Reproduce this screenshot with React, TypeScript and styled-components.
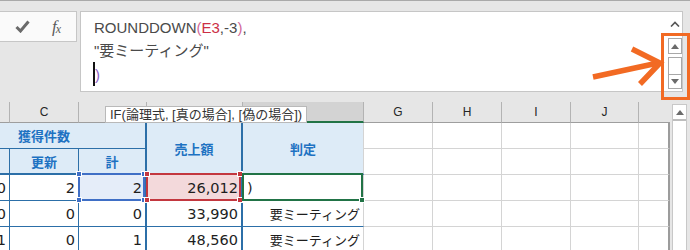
import React from 'react'
import styled, { createGlobalStyle } from 'styled-components'

const BLUE = '#2c6fa8'
const GRID = '#d4d4d4'
const HEAD_BG = '#ddebf7'
const HEAD_TEXT = '#1d72c2'
const ORANGE = '#f26a23'

const GlobalStyle = createGlobalStyle`
    html, body {
        margin: 0;
        padding: 0;
        background: #e6e6e6;
    }
    * {
        box-sizing: border-box;
    }
`

const Page = styled.div`
    position: relative;
    width: 690px;
    height: 250px;
    overflow: hidden;
    display: flex;
    flex-direction: column;
    background: #e6e6e6;
    border-top: 1px solid #a9a9a9;
    font-family: 'Liberation Sans', 'Noto Sans CJK JP', sans-serif;
`

const FormulaBar = styled.div`
    display: flex;
    align-items: flex-start;
    gap: 3px;
    height: 101px;
    padding: 10px 7px 0 0;
    flex-shrink: 0;
`

const ActionBox = styled.div`
    display: flex;
    align-items: center;
    gap: 22px;
    width: 77px;
    height: 31px;
    padding-left: 15px;
    background: #fafafa;
    border: 1px solid #c6c6c6;
    border-left: none;
`

const Fx = styled.span`
    font-family: 'Liberation Serif', serif;
    font-style: italic;
    font-size: 17px;
    color: #5a5a5a;
    letter-spacing: -1px;

    sub {
        font-size: 12px;
        vertical-align: -1px;
    }
`

const FormulaBox = styled.div`
    display: flex;
    width: 603px;
    height: 81px;
    background: #fff;
    border: 1px solid #c6c6c6;
`

const FormulaText = styled.div`
    flex: 1;
    padding: 4px 0 0 13px;
    font-size: 15px;
    line-height: 23px;
    color: #4a4a4a;
    white-space: nowrap;
`

const Tok = styled.span<{ $c: string }>`
    color: ${(p) => p.$c};
`

const Caret = styled.span`
    display: inline-block;
    width: 0;
    height: 24px;
    border-left: 2px solid #111;
    vertical-align: -6px;
    margin-left: -1px;
`

const SideControls = styled.div`
    display: flex;
    flex-direction: column;
    align-items: center;
    width: 14px;
    padding-top: 9px;
`

const ScrollButton = styled.div<{ $h: number; $gap: number }>`
    display: flex;
    align-items: center;
    justify-content: center;
    width: 14px;
    height: ${(p) => p.$h}px;
    margin-top: ${(p) => p.$gap}px;
    background: #fff;
    border: 1px solid #a8a8a8;
`

const Sheet = styled.div`
    display: flex;
    flex: 1;
`

const Grid = styled.div`
    display: grid;
    grid-template-columns: 10px 69px 68px 96px 121px 69px 69px 69px 68px 31px;
    grid-template-rows: 21px 26px 26px 26px 26px 26px;
    width: 670px;
    flex-shrink: 0;
`

const ColHead = styled.div<{ $selected?: boolean; $last?: boolean }>`
    display: flex;
    align-items: center;
    justify-content: center;
    font-size: 12px;
    color: #262626;
    background: ${(p) => (p.$selected ? '#d3d3d3' : '#e6e6e6')};
    border-right: ${(p) => (p.$last ? 'none' : '1px solid #b3b3b3')};
    border-bottom: ${(p) => (p.$selected ? '2px solid #217346' : '1px solid #9e9e9e')};
`

const TableHead = styled.div<{ $col: string; $row: string; $br: string; $bb: string; $pad?: number }>`
    grid-column: ${(p) => p.$col};
    grid-row: ${(p) => p.$row};
    display: flex;
    align-items: center;
    justify-content: ${(p) => (p.$pad ? 'flex-start' : 'center')};
    padding-left: ${(p) => p.$pad || 0}px;
    background: ${HEAD_BG};
    color: ${HEAD_TEXT};
    font-family: 'Noto Sans CJK JP', sans-serif;
    font-weight: 700;
    font-size: 13px;
    border-right: ${(p) => p.$br};
    border-bottom: ${(p) => p.$bb};
`

const DataCell = styled.div<{ $br: string; $bb: string; $tint?: string; $left?: boolean; $jp?: boolean }>`
    position: relative;
    display: flex;
    align-items: center;
    justify-content: ${(p) => (p.$left ? 'flex-start' : 'flex-end')};
    padding: ${(p) => (p.$left ? '0 0 0 4px' : '0 3px 0 0')};
    overflow: visible;
    background: ${(p) => p.$tint || '#fff'};
    font-family: ${(p) => (p.$jp ? "'Noto Sans CJK JP', sans-serif" : "'DejaVu Sans', sans-serif")};
    font-size: ${(p) => (p.$jp ? 13 : 14.5)}px;
    color: #1e1e1e;
    white-space: nowrap;
    border-right: ${(p) => p.$br};
    border-bottom: ${(p) => p.$bb};
`

const Clip = styled.div`
    overflow: hidden;
    display: flex;
    justify-content: flex-end;
    width: 100%;
`

const RefFrame = styled.div<{ $c: string }>`
    position: absolute;
    top: -2px;
    left: -1px;
    right: 0;
    bottom: -1px;
    border: 2px solid ${(p) => p.$c};
    pointer-events: none;
    z-index: 2;
`

const Handle = styled.span<{ $c: string; $x: 'l' | 'r'; $y: 't' | 'b' }>`
    position: absolute;
    width: 6px;
    height: 6px;
    background: ${(p) => p.$c};
    border: 1px solid #fff;
    ${(p) => (p.$x === 'l' ? 'left: -4px;' : 'right: -4px;')}
    ${(p) => (p.$y === 't' ? 'top: -4px;' : 'bottom: -4px;')}
`

const VScroll = styled.div`
    width: 20px;
    padding: 2px 0 0 2px;
    background: #e6e6e6;
`

const VTrack = styled.div`
    width: 15px;
    height: 150px;
    background: #fff;
    border: 1px solid #c8c8c8;
`

const VButton = styled.div`
    display: flex;
    align-items: center;
    justify-content: center;
    height: 16px;
    border-bottom: 2px solid #bdbdbd;
`

const Tooltip = styled.div`
    position: absolute;
    left: 105px;
    top: 105px;
    height: 17px;
    padding: 0 4px;
    background: #fff;
    border: 1px solid #b9b9b9;
    font-size: 13px;
    line-height: 15px;
    color: #333;
    white-space: nowrap;
    z-index: 5;
`

const Highlight = styled.div`
    position: absolute;
    left: 661px;
    top: 32px;
    width: 29px;
    height: 67px;
    border: 3px solid ${ORANGE};
    z-index: 6;
`

const Arrow = styled.svg`
    position: absolute;
    left: 588px;
    top: 44px;
    z-index: 6;
`

const Tri = ({ down }: { down?: boolean }) => (
    <svg width="8" height="5" viewBox="0 0 8 5">
        <polygon points={down ? '0,0 8,0 4,5' : '0,5 8,5 4,0'} fill="#6b6b6b" />
    </svg>
)

const cols = ['', 'C', 'D', 'E', 'F', 'G', 'H', 'I', 'J', '']

const rows = [
    { b: '0', c: '2', d: '2', e: '26,012', f: ')' },
    { b: '0', c: '0', d: '0', e: '33,990', f: '要ミーティング' },
    { b: '1', c: '0', d: '1', e: '48,560', f: '要ミーティング' },
]

const thin = `1px solid ${BLUE}`
const thick = `2px solid ${BLUE}`
const gray = `1px solid ${GRID}`
const edge = '2px solid #9c9c9c'

function Corners({ c, fill }: { c: string; fill?: boolean }) {
    if (fill) return <Handle $c={c} $x="r" $y="b" />
    return (
        <>
            <Handle $c={c} $x="l" $y="t" />
            <Handle $c={c} $x="r" $y="t" />
            <Handle $c={c} $x="l" $y="b" />
            <Handle $c={c} $x="r" $y="b" />
        </>
    )
}

function EmptyCells({ row }: { row: number }) {
    return (
        <>
            {[6, 7, 8, 9, 10].map((col) => (
                <DataCell
                    key={`${row}-${col}`}
                    style={{ gridColumn: col, gridRow: row }}
                    $br={col === 10 ? edge : gray}
                    $bb={gray}
                />
            ))}
        </>
    )
}

export default function App() {
    return (
        <Page>
            <GlobalStyle />
            <FormulaBar>
                <ActionBox>
                    <svg width="15" height="13" viewBox="0 0 15 13">
                        <polyline points="1.5,7 5.5,11 13.5,1.5" fill="none" stroke="#6a6a6a" strokeWidth="3" />
                    </svg>
                    <Fx>
                        f<sub>x</sub>
                    </Fx>
                </ActionBox>
                <FormulaBox>
                    <FormulaText>
                        <div>
                            ROUNDDOWN<Tok $c="#d2699a">(</Tok>
                            <Tok $c="#cc2f45">E3</Tok>,-3<Tok $c="#d2699a">)</Tok>,
                        </div>
                        <div>"要ミーティング"</div>
                        <div>
                            <Caret />
                            <Tok $c="#8b63c9">)</Tok>
                        </div>
                    </FormulaText>
                    <SideControls>
                        <svg width="10" height="6" viewBox="0 0 10 6">
                            <polyline points="1,5.5 5,1.5 9,5.5" fill="none" stroke="#555" strokeWidth="1.6" />
                        </svg>
                        <ScrollButton $h={16} $gap={11}>
                            <Tri />
                        </ScrollButton>
                        <ScrollButton $h={18} $gap={3} />
                        <ScrollButton $h={15} $gap={-1}>
                            <Tri down />
                        </ScrollButton>
                    </SideControls>
                </FormulaBox>
            </FormulaBar>

            <Sheet>
                <Grid>
                    {cols.map((c, i) => (
                        <ColHead key={i} $selected={c === 'F'} $last={i === cols.length - 1}>
                            {c}
                        </ColHead>
                    ))}

                    <TableHead $col="1 / 4" $row="2" $br={thick} $bb={thin} $pad={18}>
                        獲得件数
                    </TableHead>
                    <TableHead $col="4" $row="2 / 4" $br={thick} $bb={thick}>
                        売上額
                    </TableHead>
                    <TableHead $col="5" $row="2 / 4" $br={gray} $bb={thick}>
                        判定
                    </TableHead>
                    <EmptyCells row={2} />

                    <TableHead $col="1" $row="3" $br={thin} $bb={thick} />
                    <TableHead $col="2" $row="3" $br={thin} $bb={thick}>
                        更新
                    </TableHead>
                    <TableHead $col="3" $row="3" $br={thick} $bb={thick}>
                        計
                    </TableHead>
                    <EmptyCells row={3} />

                    {rows.map((r, i) => {
                        const first = i === 0
                        return (
                            <React.Fragment key={i}>
                                <DataCell $br={thin} $bb={thin} style={{ gridRow: i + 4 }}>
                                    <Clip>{r.b}</Clip>
                                </DataCell>
                                <DataCell $br={thin} $bb={thin} style={{ gridRow: i + 4 }}>
                                    {r.c}
                                </DataCell>
                                <DataCell $br={thick} $bb={thin} $tint={first ? '#e5edf9' : undefined} style={{ gridRow: i + 4 }}>
                                    {r.d}
                                    {first && (
                                        <RefFrame $c="#3f6fc6">
                                            <Corners c="#3f6fc6" />
                                        </RefFrame>
                                    )}
                                </DataCell>
                                <DataCell $br={thick} $bb={thin} $tint={first ? '#f3d9db' : undefined} style={{ gridRow: i + 4 }}>
                                    {r.e}
                                    {first && (
                                        <RefFrame $c="#c3373f">
                                            <Corners c="#c3373f" />
                                        </RefFrame>
                                    )}
                                </DataCell>
                                <DataCell $br={gray} $bb={thin} $left={first} $jp={!first} style={{ gridRow: i + 4 }}>
                                    {r.f}
                                    {first && (
                                        <RefFrame $c="#217346">
                                            <Corners c="#217346" fill />
                                        </RefFrame>
                                    )}
                                </DataCell>
                                <EmptyCells row={i + 4} />
                            </React.Fragment>
                        )
                    })}
                </Grid>
                <VScroll>
                    <VTrack>
                        <VButton>
                            <Tri />
                        </VButton>
                    </VTrack>
                </VScroll>
            </Sheet>

            <Tooltip>IF(論理式, [真の場合], [偽の場合])</Tooltip>

            <Highlight />
            <Arrow width="80" height="46" viewBox="0 0 80 46">
                <line x1="5" y1="32" x2="70" y2="18" stroke={ORANGE} strokeWidth="5.5" strokeLinecap="butt" />
                <polyline
                    points="44,4 72,18 52,39"
                    fill="none"
                    stroke={ORANGE}
                    strokeWidth="5.5"
                    strokeLinejoin="miter"
                />
            </Arrow>
        </Page>
    )
}
